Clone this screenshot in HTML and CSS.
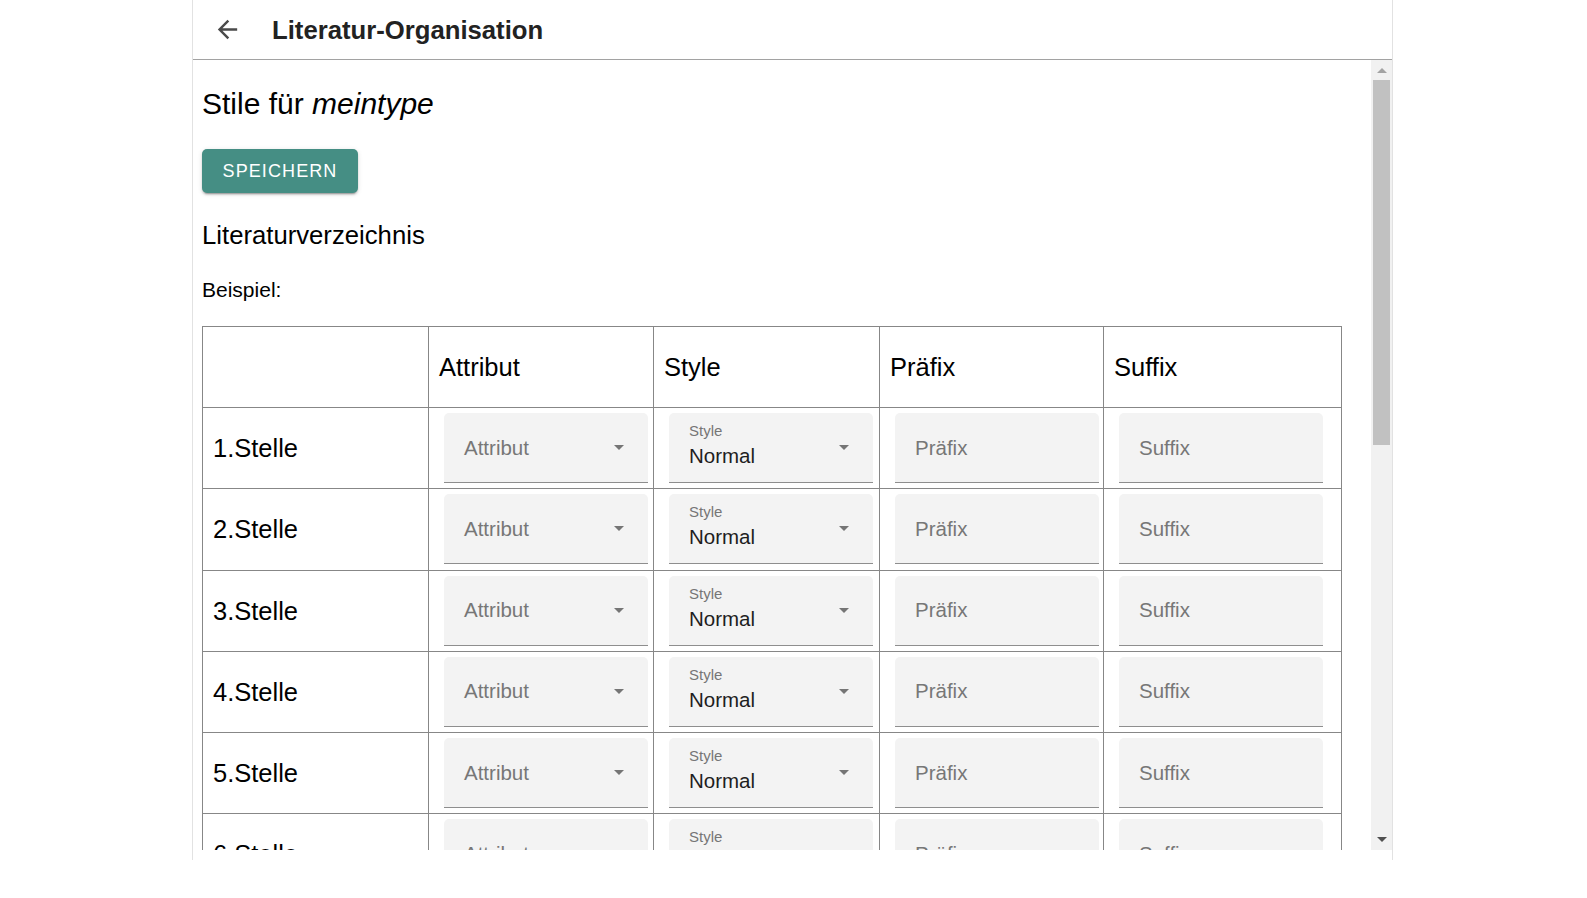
FILE: index.html
```html
<!DOCTYPE html>
<html lang="de">
<head>
<meta charset="utf-8">
<title>Literatur-Organisation</title>
<link rel="stylesheet" href="styles.css">
</head>
<body>
<div class="app">
  <header class="topbar">
    <svg class="back" viewBox="0 0 24 24" aria-hidden="true"><path d="M20 11H7.83l5.59-5.59L12 4l-8 8 8 8 1.41-1.41L7.83 13H20v-2z"/></svg>
    <h1 class="apptitle">Literatur-Organisation</h1>
  </header>
  <div class="body">
    <main class="content">
      <h2 class="page-title">Stile für <em>meintype</em></h2>
      <button class="btn" type="button">Speichern</button>
      <h3 class="section">Literaturverzeichnis</h3>
      <p class="example">Beispiel:</p>
      <div class="grid">
        <div class="cell head"></div>
        <div class="cell head">Attribut</div>
        <div class="cell head">Style</div>
        <div class="cell head">Präfix</div>
        <div class="cell head">Suffix</div>

        <div class="cell rowhead">1.Stelle</div>
        <div class="cell fc"><div class="field select"><span class="ph">Attribut</span><i class="caret"></i></div></div>
        <div class="cell fc"><div class="field select"><div class="stack"><span class="lbl">Style</span><span class="val">Normal</span></div><i class="caret"></i></div></div>
        <div class="cell fc"><div class="field"><span class="ph">Präfix</span></div></div>
        <div class="cell fc"><div class="field"><span class="ph">Suffix</span></div></div>

        <div class="cell rowhead">2.Stelle</div>
        <div class="cell fc"><div class="field select"><span class="ph">Attribut</span><i class="caret"></i></div></div>
        <div class="cell fc"><div class="field select"><div class="stack"><span class="lbl">Style</span><span class="val">Normal</span></div><i class="caret"></i></div></div>
        <div class="cell fc"><div class="field"><span class="ph">Präfix</span></div></div>
        <div class="cell fc"><div class="field"><span class="ph">Suffix</span></div></div>

        <div class="cell rowhead">3.Stelle</div>
        <div class="cell fc"><div class="field select"><span class="ph">Attribut</span><i class="caret"></i></div></div>
        <div class="cell fc"><div class="field select"><div class="stack"><span class="lbl">Style</span><span class="val">Normal</span></div><i class="caret"></i></div></div>
        <div class="cell fc"><div class="field"><span class="ph">Präfix</span></div></div>
        <div class="cell fc"><div class="field"><span class="ph">Suffix</span></div></div>

        <div class="cell rowhead">4.Stelle</div>
        <div class="cell fc"><div class="field select"><span class="ph">Attribut</span><i class="caret"></i></div></div>
        <div class="cell fc"><div class="field select"><div class="stack"><span class="lbl">Style</span><span class="val">Normal</span></div><i class="caret"></i></div></div>
        <div class="cell fc"><div class="field"><span class="ph">Präfix</span></div></div>
        <div class="cell fc"><div class="field"><span class="ph">Suffix</span></div></div>

        <div class="cell rowhead">5.Stelle</div>
        <div class="cell fc"><div class="field select"><span class="ph">Attribut</span><i class="caret"></i></div></div>
        <div class="cell fc"><div class="field select"><div class="stack"><span class="lbl">Style</span><span class="val">Normal</span></div><i class="caret"></i></div></div>
        <div class="cell fc"><div class="field"><span class="ph">Präfix</span></div></div>
        <div class="cell fc"><div class="field"><span class="ph">Suffix</span></div></div>

        <div class="cell rowhead">6.Stelle</div>
        <div class="cell fc"><div class="field select"><span class="ph">Attribut</span><i class="caret"></i></div></div>
        <div class="cell fc"><div class="field select"><div class="stack"><span class="lbl">Style</span><span class="val">Normal</span></div><i class="caret"></i></div></div>
        <div class="cell fc"><div class="field"><span class="ph">Präfix</span></div></div>
        <div class="cell fc"><div class="field"><span class="ph">Suffix</span></div></div>
      </div>
    </main>
    <div class="scrollbar" aria-hidden="true">
      <div class="sb-btn"><i class="sb-up"></i></div>
      <div class="sb-thumb"></div>
      <div class="sb-fill"></div>
      <div class="sb-btn sb-btn-down"><i class="sb-down"></i></div>
    </div>
  </div>
</div>
</body>
</html>
```

FILE: styles.css
```css
* { box-sizing: border-box; }

html, body {
  margin: 0;
  padding: 0;
  background: #ffffff;
}

body {
  font-family: "Liberation Sans", Arial, sans-serif;
  color: #000000;
  padding-right: 2px;
}

.app {
  width: 1201px;
  height: 860px;
  margin: 0 auto;
  border-left: 1px solid #e2e2e2;
  border-right: 1px solid #e2e2e2;
  display: flex;
  flex-direction: column;
}

.topbar {
  height: 60px;
  flex: none;
  display: flex;
  align-items: center;
  padding-left: 20px;
  border-bottom: 1px solid #a2a2a2;
}

.back {
  width: 29px;
  height: 29px;
  fill: #4a4a4a;
  flex: none;
}

.apptitle {
  margin: 0 0 0 30px;
  font-size: 25.7px;
  font-weight: 700;
  color: #222222;
  line-height: 30px;
}

.body {
  height: 790px;
  flex: none;
  display: flex;
}

.content {
  flex: 1;
  min-width: 0;
  overflow: hidden;
  padding-left: 9px;
}

.page-title {
  margin: 26px 0 0;
  font-size: 30px;
  line-height: 36px;
  font-weight: 400;
}

.page-title em {
  font-style: italic;
}

.btn {
  display: block;
  margin-top: 27px;
  width: 156px;
  height: 44px;
  padding: 0;
  border: none;
  border-radius: 5px;
  background: #458e84;
  color: #ffffff;
  font-family: inherit;
  font-size: 18px;
  letter-spacing: 1.1px;
  text-transform: uppercase;
  box-shadow: 0 3px 1px -2px rgba(0,0,0,.2), 0 2px 2px 0 rgba(0,0,0,.14), 0 1px 5px 0 rgba(0,0,0,.12);
}

.section {
  margin: 27px 0 0;
  font-size: 25.7px;
  line-height: 30px;
  font-weight: 400;
}

.example {
  margin: 28px 0 0;
  font-size: 21px;
  line-height: 24px;
}

.grid {
  margin-top: 24px;
  display: grid;
  grid-template-columns: 226px 225px 226px 224px 238px;
  width: 1140px;
  border-left: 1px solid #878787;
  border-top: 1px solid #878787;
}

.cell {
  height: 81.2px;
  border-right: 1px solid #878787;
  border-bottom: 1px solid #878787;
  display: flex;
  align-items: center;
}

.head, .rowhead {
  padding-left: 10px;
  font-size: 25.5px;
  line-height: 30px;
}

.fc {
  padding-left: 15px;
}

.field {
  width: 204px;
  height: 70px;
  background: #f3f3f3;
  border-radius: 5px 5px 0 0;
  border-bottom: 1px solid #8e8e8e;
  display: flex;
  align-items: center;
  padding: 0 20px;
}

.select {
  padding-right: 24px;
}

.ph {
  font-size: 20.5px;
  line-height: 24px;
  color: #777777;
}

.stack {
  align-self: flex-start;
  padding-top: 9px;
  display: flex;
  flex-direction: column;
}

.lbl {
  font-size: 15px;
  line-height: 18px;
  color: #767676;
}

.val {
  margin-top: 4px;
  font-size: 20.5px;
  line-height: 24px;
  color: #1e1e1e;
}

.caret {
  margin-left: auto;
  width: 0;
  height: 0;
  border-left: 5px solid transparent;
  border-right: 5px solid transparent;
  border-top: 5px solid #757575;
}

.scrollbar {
  width: 21px;
  flex: none;
  background: #f1f1f1;
  display: flex;
  flex-direction: column;
}

.sb-btn {
  height: 20px;
  flex: none;
  display: flex;
  align-items: center;
  justify-content: center;
}

.sb-btn-down {
  height: 21px;
}

.sb-up {
  width: 0;
  height: 0;
  border-left: 5px solid transparent;
  border-right: 5px solid transparent;
  border-bottom: 5px solid #a3a3a3;
}

.sb-down {
  width: 0;
  height: 0;
  border-left: 5px solid transparent;
  border-right: 5px solid transparent;
  border-top: 5px solid #505050;
}

.sb-thumb {
  height: 365px;
  margin: 0 2px;
  background: #c1c1c1;
  flex: none;
}

.sb-fill {
  flex: 1;
}
```
